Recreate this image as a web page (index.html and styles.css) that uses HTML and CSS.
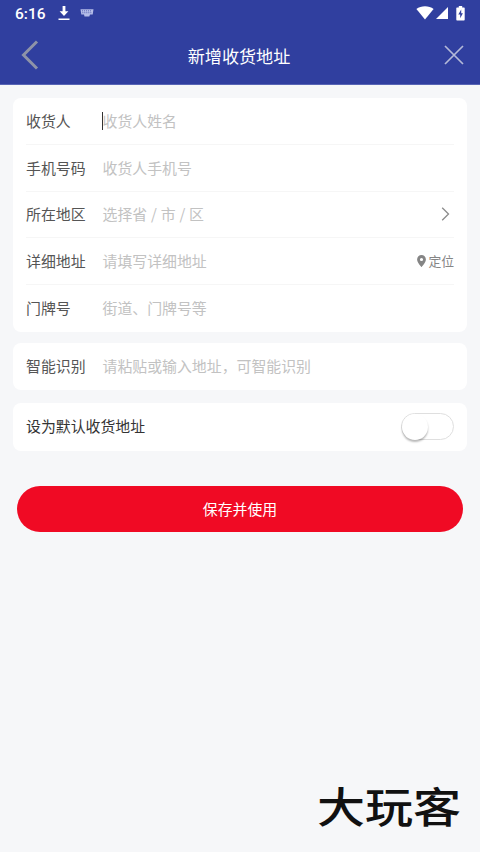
FILE: index.html
```html
<!DOCTYPE html>
<html lang="zh-cn">
<head>
    <meta charset="UTF-8">
    <meta name="viewport" content="width=device-width, initial-scale=1.0">
    <title>新增收货地址</title>
    <link rel="stylesheet" href="styles.css">
</head>
<body>
    <header class="header">
        <div class="status-bar">
            <span class="time">6:16</span>
            <svg class="icon-download" width="12" height="15" viewBox="0 0 12 15" fill="#fff">
                <path d="M4.6 0h2.8v5.2h3L6 9.9 1.6 5.2h3zM.5 12.4h11v1.7H.5z"/>
            </svg>
            <svg class="icon-keyboard" width="14" height="8" viewBox="0 0 14 8">
                <path d="M.5.3h13l-.8 5.2H10l-.7 2H4.500l-.5-2H1.300z" fill="#b4bce8"/>
                <path d="M2 1.800h10M2.300 3.700h9.400" stroke="#4d59ad" stroke-width=".8" stroke-dasharray="1 1"/>
            </svg>
            <div class="status-right">
                <svg width="18" height="14" viewBox="0 0 18 14" fill="#fff">
                    <path d="M.4 3C5-.8 13-.8 17.600 3L9 13.500z"/>
                </svg>
                <svg class="icon-signal" width="12" height="12" viewBox="0 0 12 12" fill="#fff">
                    <path d="M12 0v12H0z"/>
                </svg>
                <svg class="icon-battery" width="9" height="15" viewBox="0 0 9 15">
                    <path d="M2.800 0h3.400v1.400H8q.7 0 .7.700v11.500q0 .9-.7.900H1q-.7 0-.7-.9V2.100q0-.7.700-.7h1.800z" fill="#fff"/>
                    <path d="M5.200 3.500L2.300 8.400h1.900v3.900l2.700-5H5.200z" fill="#303f9f"/>
                </svg>
            </div>
        </div>
        <div class="nav">
            <svg class="icon-back" width="18" height="30" viewBox="0 0 18 30" fill="none" stroke="#8e93a8" stroke-width="3">
                <path d="M16 1.500L2.500 15 16 28.500"/>
            </svg>
            <h1>新增收货地址</h1>
            <svg class="icon-close" width="20" height="20" viewBox="0 0 20 20" fill="none" stroke="#b4b9d8" stroke-width="1.700">
                <path d="M1 1l18 18M19 1L1 19"/>
            </svg>
        </div>
    </header>

    <div class="container">
        <div class="card">
            <div class="form-group">
                <span class="label">收货人</span>
                <span class="cursor"></span>
                <span class="placeholder">收货人姓名</span>
            </div>
            <div class="form-group">
                <span class="label">手机号码</span>
                <span class="placeholder">收货人手机号</span>
            </div>
            <div class="form-group">
                <span class="label">所在地区</span>
                <span class="placeholder region">选择省 / 市 / 区</span>
                <svg class="icon-arrow" width="9" height="14" viewBox="0 0 9 14" fill="none" stroke="#8c8c8c" stroke-width="1.300">
                    <path d="M1.200.8L7.500 7l-6.300 6.200"/>
                </svg>
            </div>
            <div class="form-group">
                <span class="label">详细地址</span>
                <span class="placeholder">请填写详细地址</span>
                <span class="locate">
                    <svg width="9" height="12" viewBox="0 0 9 12">
                        <path d="M4.500 0A4.400 4.400 0 0 0 .1 4.400C.1 7.500 4.500 12 4.500 12s4.400-4.500 4.400-7.600A4.400 4.400 0 0 0 4.500 0zm0 2.900a1.600 1.600 0 1 1 0 3.200 1.600 1.600 0 0 1 0-3.200z" fill="#858585"/>
                    </svg>定位</span>
            </div>
            <div class="form-group">
                <span class="label">门牌号</span>
                <span class="placeholder">街道、门牌号等</span>
            </div>
        </div>

        <div class="card card-smart">
            <div class="form-group">
                <span class="label">智能识别</span>
                <span class="placeholder">请粘贴或输入地址，可智能识别</span>
            </div>
        </div>

        <div class="card card-default">
            <span class="default-text">设为默认收货地址</span>
            <div class="switch"><div class="switch-dot"></div></div>
        </div>

        <button class="save">保存并使用</button>
    </div>

    <div class="watermark">大玩客</div>
</body>
</html>
```

FILE: styles.css
```css
* { box-sizing: border-box; }
body {
    margin: 0;
    height: 852px;
    overflow: hidden;
    position: relative;
    background: #f6f7f9;
    font-family: "Noto Sans CJK SC", sans-serif;
    font-size: 14.9px;
}
svg { display: block; flex: none; }

.header { height: 85px; background: #303f9f; color: #fff; border-bottom: 1px solid #5865b5; }
.status-bar { display: flex; align-items: center; height: 26px; padding: 0 15px; }
.time { width: 43px; padding-top: 2px; font: 500 15.5px/26px Roboto, sans-serif; }
.icon-keyboard { margin-left: 10px; }
.status-right { display: flex; align-items: center; margin-left: auto; }
.icon-signal { margin-left: 2px; }
.icon-battery { margin-left: 8px; }
.nav { display: flex; align-items: center; height: 58px; padding: 0 16px 0 21px; }
.nav h1 { flex: 1; margin: 0; padding: 1px 5px 0 0; text-align: center; font-size: 17.1px; font-weight: 400; line-height: 24px; }

.container { padding: 13px 13px 0; }
.card { background: #fff; border-radius: 8px; padding: 0 13px; }
.form-group { position: relative; display: flex; align-items: center; height: 46.8px; padding-bottom: 1px; line-height: 22px; }
.form-group:not(:last-child) { padding-bottom: 0; border-bottom: 1px solid #f6f6f6; }
.label { width: 76.5px; color: #555; }
.placeholder { color: #c2c2c2; }
.region { word-spacing: .5px; }
.cursor { position: absolute; left: 76px; top: 14px; width: 1px; height: 18px; background: #333; }
.icon-arrow { margin: 0 4px 0 auto; }
.locate { display: flex; align-items: center; gap: 2px; margin-left: auto; font-size: 12.8px; color: #858585; }

.card-smart { margin-top: 11px; }
.card-default { display: flex; align-items: center; justify-content: space-between; height: 48px; margin-top: 13px; color: #333; }
.default-text { padding-bottom: 2px; }
.switch { width: 53px; height: 27px; border: 1px solid #dfdfdf; border-radius: 14px; }
.switch-dot { width: 26px; height: 26px; border-radius: 50%; background: #fff; box-shadow: 0 2px 2px rgba(0, 0, 0, .28); }

.save {
    display: block;
    width: 446px;
    height: 46px;
    margin: 35px auto 0;
    padding: 0 0 1px;
    border: none;
    border-radius: 23px;
    background: #f00a24;
    color: #fff;
    font: inherit;
}

.watermark {
    position: absolute;
    right: 19px;
    bottom: 19px;
    font-size: 48px;
    font-weight: 500;
    line-height: 56px;
    color: #111;
    transform: scaleY(.88);
}
```
